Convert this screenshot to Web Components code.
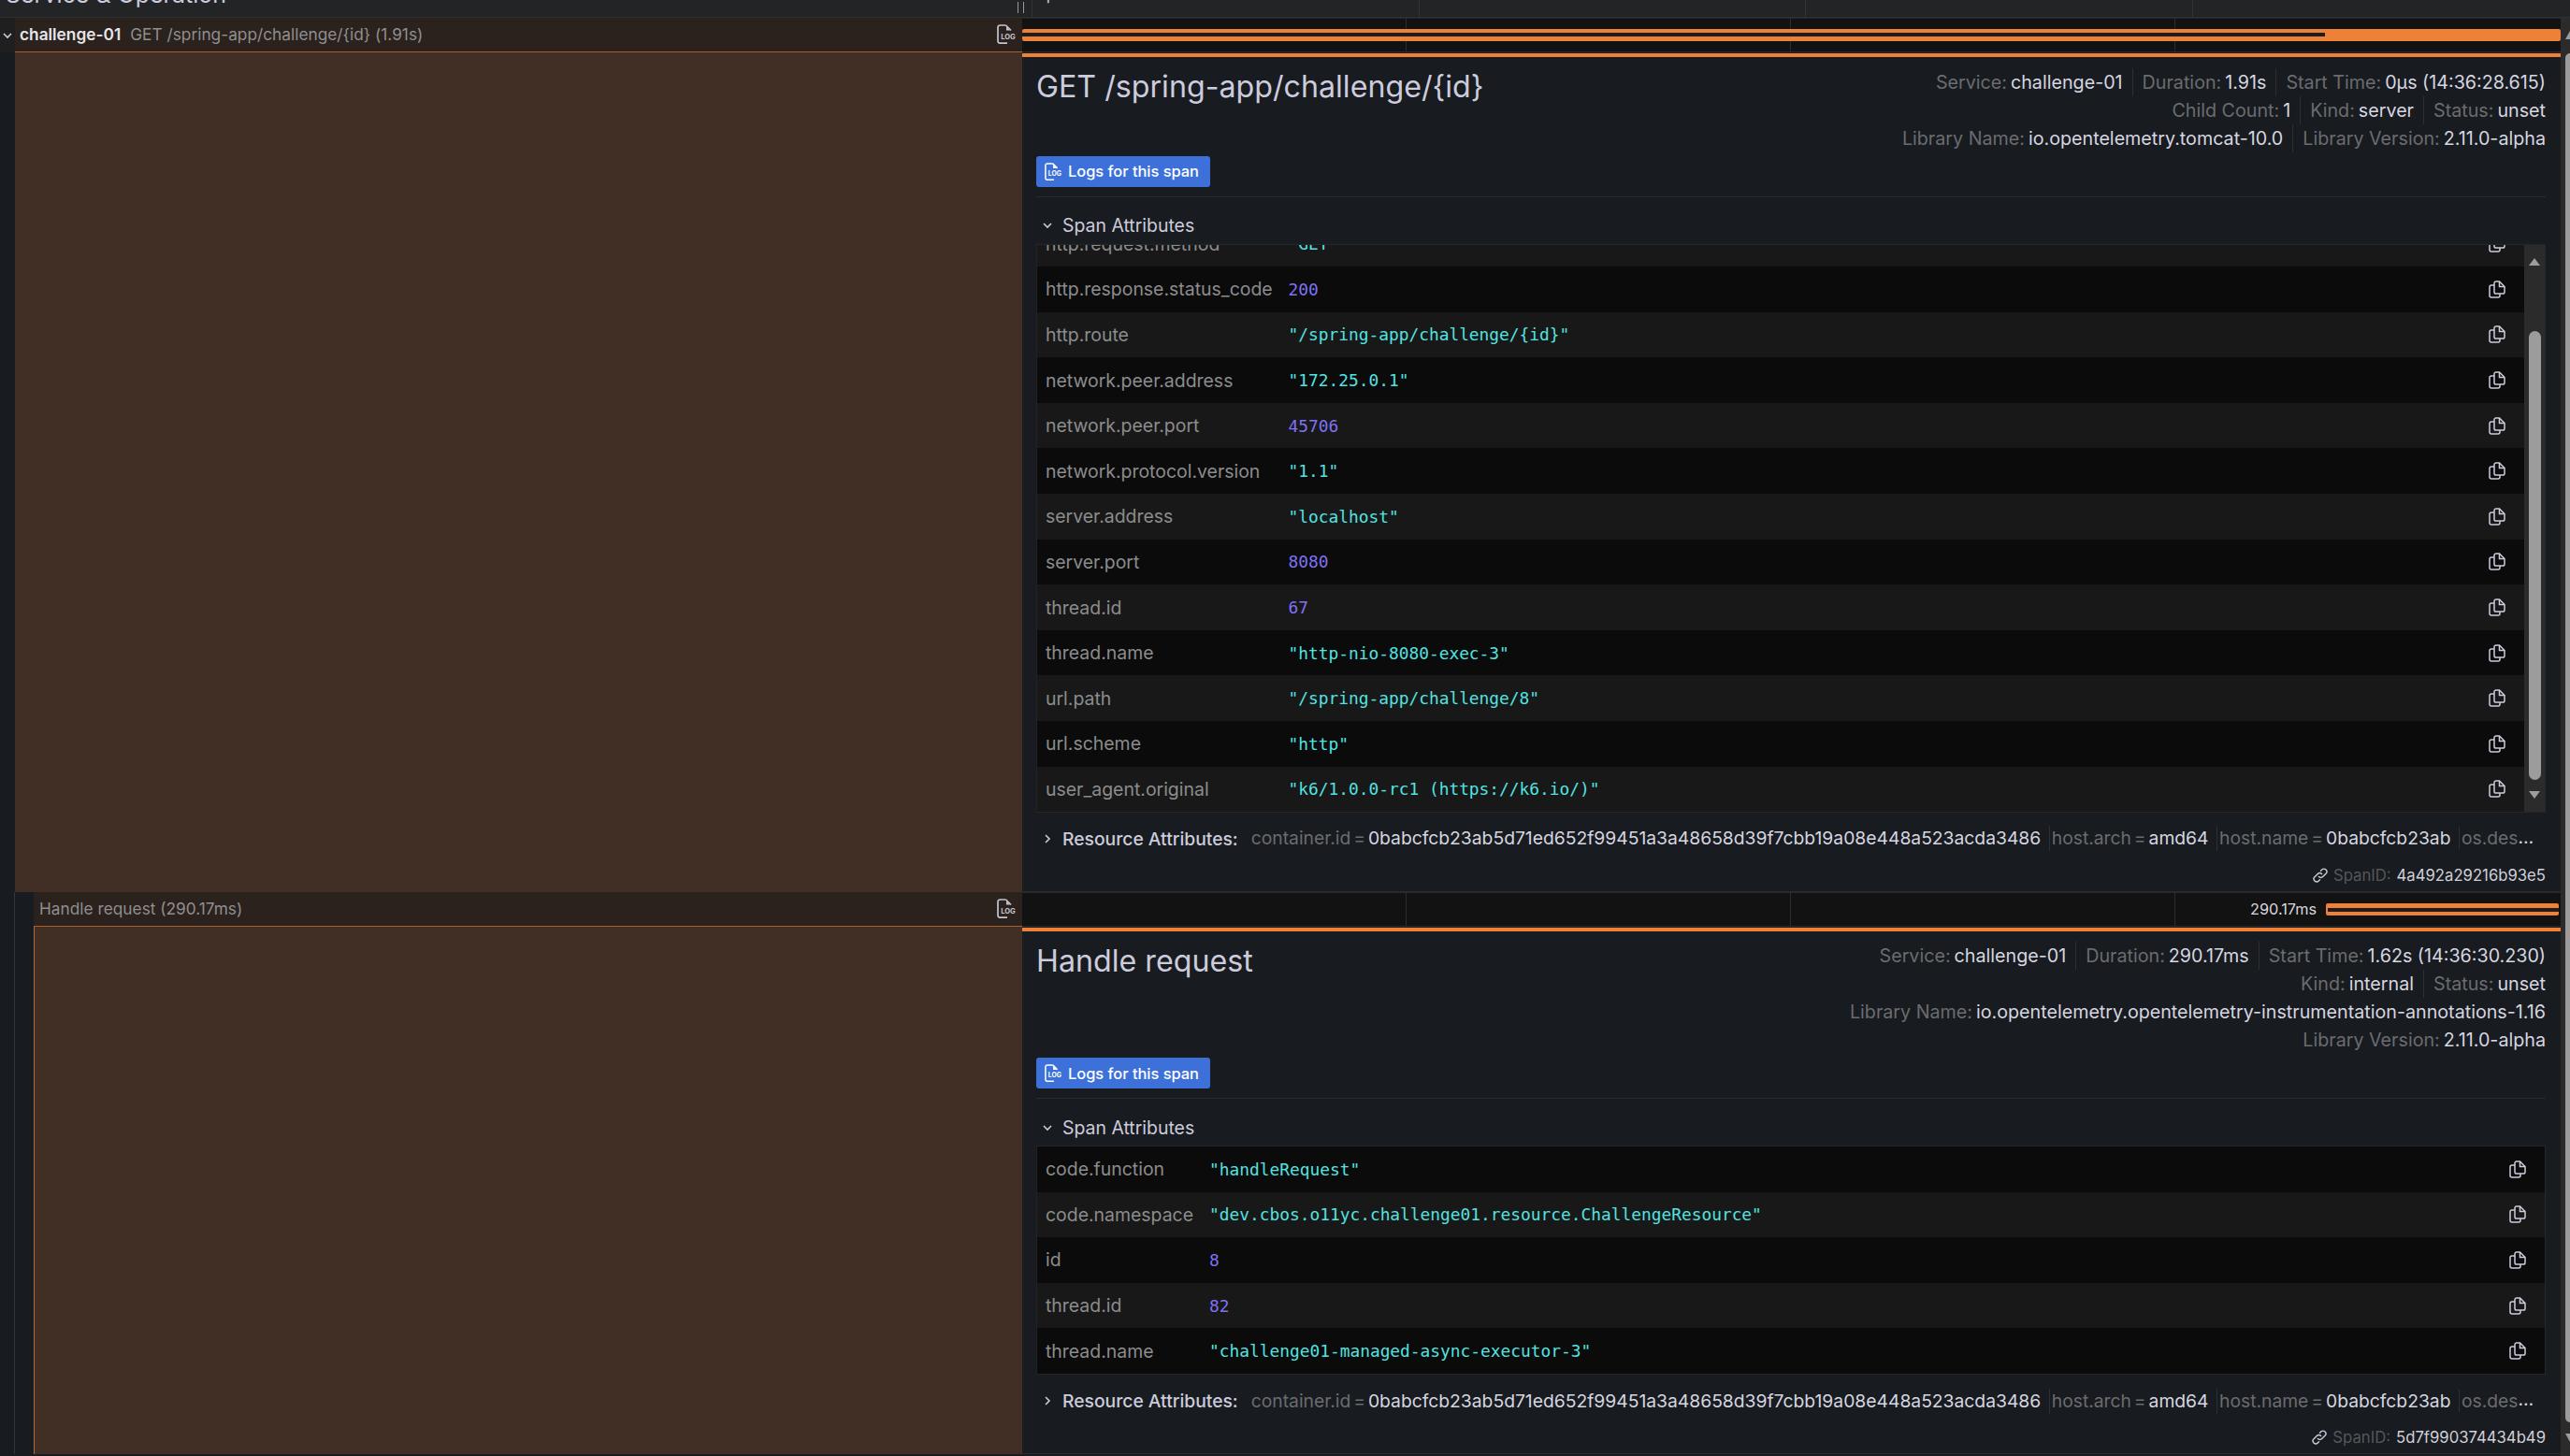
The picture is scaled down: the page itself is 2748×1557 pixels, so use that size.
<!DOCTYPE html>
<html lang="en"><head><meta charset="utf-8"><title>Trace view</title>
<style>
html,body{margin:0;padding:0;height:1557px;overflow:hidden;background:#181b1f;}
body{font-family:Inter,"Noto Sans",sans-serif;color:#ccccdc;display:flex;flex-direction:column;}
#main{display:flex;flex:1;min-height:0}
#spans{width:2738px;flex:none;display:flex;flex-direction:column;overflow:hidden}
</style></head><body>
<trace-header></trace-header>
<div id="main">
<div id="spans">
<span-group indent="0" label-main="challenge-01" label="GET /spring-app/challenge/{id} (1.91s)" fill="1393">
  <span-detail title-text="GET /spring-app/challenge/{id}" scroll span-id="4a492a29216b93e5" style="--val-col:259.5px">
    <meta-row slot="meta"><meta-item k="Service" v="challenge-01"></meta-item><meta-item k="Duration" v="1.91s"></meta-item><meta-item k="Start Time" v="0μs (14:36:28.615)"></meta-item></meta-row>
    <meta-row slot="meta"><meta-item k="Child Count" v="1"></meta-item><meta-item k="Kind" v="server"></meta-item><meta-item k="Status" v="unset"></meta-item></meta-row>
    <meta-row slot="meta"><meta-item k="Library Name" v="io.opentelemetry.tomcat-10.0"></meta-item><meta-item k="Library Version" v="2.11.0-alpha"></meta-item></meta-row>
    <attr-row alt k="http.request.method" s='"GET"'></attr-row>
    <attr-row k="http.response.status_code" n="200"></attr-row>
    <attr-row alt k="http.route" s='"/spring-app/challenge/{id}"'></attr-row>
    <attr-row k="network.peer.address" s='"172.25.0.1"'></attr-row>
    <attr-row alt k="network.peer.port" n="45706"></attr-row>
    <attr-row k="network.protocol.version" s='"1.1"'></attr-row>
    <attr-row alt k="server.address" s='"localhost"'></attr-row>
    <attr-row k="server.port" n="8080"></attr-row>
    <attr-row alt k="thread.id" n="67"></attr-row>
    <attr-row k="thread.name" s='"http-nio-8080-exec-3"'></attr-row>
    <attr-row alt k="url.path" s='"/spring-app/challenge/8"'></attr-row>
    <attr-row k="url.scheme" s='"http"'></attr-row>
    <attr-row alt k="user_agent.original" s='"k6/1.0.0-rc1 (https://k6.io/)"'></attr-row>
  </span-detail>
</span-group>
<span-group indent="1" label="Handle request (290.17ms)" duration="290.17ms">
  <span-detail title-text="Handle request" span-id="5d7f990374434b49" style="--val-col:175px">
    <meta-row slot="meta"><meta-item k="Service" v="challenge-01"></meta-item><meta-item k="Duration" v="290.17ms"></meta-item><meta-item k="Start Time" v="1.62s (14:36:30.230)"></meta-item></meta-row>
    <meta-row slot="meta"><meta-item k="Kind" v="internal"></meta-item><meta-item k="Status" v="unset"></meta-item></meta-row>
    <meta-row slot="meta"><meta-item k="Library Name" v="io.opentelemetry.opentelemetry-instrumentation-annotations-1.16"></meta-item></meta-row>
    <meta-row slot="meta"><meta-item k="Library Version" v="2.11.0-alpha"></meta-item></meta-row>
    <attr-row k="code.function" s='"handleRequest"'></attr-row>
    <attr-row alt k="code.namespace" s='"dev.cbos.o11yc.challenge01.resource.ChallengeResource"'></attr-row>
    <attr-row k="id" n="8"></attr-row>
    <attr-row alt k="thread.id" n="82"></attr-row>
    <attr-row k="thread.name" s='"challenge01-managed-async-executor-3"'></attr-row>
  </span-detail>
</span-group>
</div>
<page-scrollbar></page-scrollbar>
</div>
<script>
const LOG=(c)=>`<svg width="21" height="21" viewBox="0 0 21 21" fill="none" style="display:block"><path d="M9.5 1H3.2A2.2 2.2 0 0 0 1 3.2V18a2.2 2.2 0 0 0 2.2 2.2H11" stroke="${c}" stroke-width="1.7"/><path d="M9.5 1 15 6.5" stroke="${c}" stroke-width="1.7"/><path d="M10 2.5 14 6.5H10Z" fill="${c}"/><text x="4.2" y="15.6" font-family="Inter,sans-serif" font-weight="700" font-size="7.6" fill="${c}">LOG</text></svg>`;
const COPY=`<svg width="18" height="19" viewBox="0 0 18 19" fill="none" stroke="#ccccdc" stroke-width="1.5" style="display:block"><path d="M6 2.6A1.8 1.8 0 0 1 7.6 1H11.5L17 6.5V12.2A1.8 1.8 0 0 1 15.2 14H7.8A1.8 1.8 0 0 1 6 12.2Z"/><path d="M11.5 1V6.5H17"/><path d="M6 5H3A2 2 0 0 0 1 7V16A2 2 0 0 0 3 18H10A2 2 0 0 0 12 16V14"/></svg>`;
const LINK=`<svg width="18" height="18" viewBox="0 0 18 18" fill="none" stroke="#ccccdc" stroke-width="1.4" stroke-linecap="round" style="display:block"><path d="M7.4 10.6a3 3 0 0 0 4.3 0l3.3-3.3a3 3 0 0 0-4.3-4.3l-1.2 1.2"/><path d="M10.6 7.4a3 3 0 0 0-4.3 0L3 10.7A3 3 0 0 0 7.3 15l1.2-1.2"/></svg>`;
const CHEV=(d,c='#ccccdc')=>`<svg width="12" height="12" viewBox="0 0 12 12" fill="none" stroke="${c}" stroke-width="1.6" style="display:block"><path d="${d==='down'?'M2 4l4 4 4-4':'M4 2l4 4-4 4'}"/></svg>`;
const esc=s=>String(s).replace(/&/g,'&amp;').replace(/</g,'&lt;').replace(/"/g,'&quot;');
class Base extends HTMLElement{constructor(){super();this.attachShadow({mode:'open'});}
 a(n){return this.getAttribute(n);}
}
customElements.define('trace-header',class extends Base{connectedCallback(){this.shadowRoot.innerHTML=`<style>
:host{display:flex;height:19px;flex:none;background:#222426;box-sizing:border-box;overflow:hidden;position:relative;box-shadow:inset 0 -1px 0 #2f3033}
.name{width:1088px;flex:none;box-sizing:border-box;padding-left:6px;font-size:25px;line-height:30px;margin-top:-21px;color:#ccccdc;height:30px;white-space:nowrap}
.pause{flex:none;height:12px;margin-top:2px;box-sizing:border-box;border-left:1px solid #999;border-right:1px solid #999;width:7px;margin-right:8px}
.t{flex:none;width:413.5px;box-sizing:border-box;border-left:1px solid #333;padding-left:4px;font-size:17px;line-height:22px;height:19px;color:#ccccdc;display:flex;justify-content:space-between}
.t.last{flex:1;width:auto;padding-right:26px;padding-left:10px}
.t span{display:block;margin-top:-17px}
</style><div class="name">Service &amp; Operation</div><div class="pause"></div><div class="t"><span>0μs</span></div><div class="t"><span>477.5ms</span></div><div class="t"><span>955ms</span></div><div class="t last"><span>1.43s</span><span>1.91s</span></div>`;}});
customElements.define('page-scrollbar',class extends Base{connectedCallback(){this.shadowRoot.innerHTML=`<style>
:host{display:flex;flex-direction:column;flex:1;background:#2b2b2b;align-items:flex-end;box-sizing:border-box;position:relative}
.up{height:38px;flex:none;width:5px;display:flex;align-items:flex-start;padding-top:14px;box-sizing:border-box}
.thumb{width:5px;height:1464px;background:#9c9c9c;border-radius:5px 0 0 5px;flex:none}
.arr{width:0;height:0;border:5px solid transparent;border-left-width:5px;border-right-width:0;border-bottom:9px solid #9c9c9c;border-top:0}
.dn{margin-top:12px;width:0;height:0;border-top:9px solid #9c9c9c;border-left:5px solid transparent}
</style><div class="up"><div class="arr"></div></div><div class="thumb"></div><div class="dn"></div>`;}});
customElements.define('span-group',class extends Base{connectedCallback(){
 const ind=this.a('indent')==='1';const main=this.a('label-main');const fill=this.a('fill');const dur=this.a('duration');
 this.shadowRoot.innerHTML=`<style>
:host{display:grid;grid-template-columns:1093px 1fr;grid-template-rows:37px auto;flex:none;font-size:17.3px}
.gutter{display:flex;flex:none;width:${ind?36:16}px;background:#181b1f;position:relative}
.g16{width:16px;flex:none;box-sizing:border-box;border-right:${ind?'1px solid #34363a':'0'};background:${ind?'#181b1f':'#1f1f20'};display:flex;align-items:center;justify-content:center}
.g20{flex:1}
.row{display:flex;background:#181b1f}
.lbl{flex:1;min-width:0;display:flex;align-items:center;background:#2b211d;border-bottom:1px solid #a75f2d;padding-left:${ind?6:5}px;padding-bottom:1px;color:#8f8f8f;gap:10px;white-space:nowrap;box-sizing:border-box;justify-content:flex-start}
.lbl b{color:#e6e6ea;font-weight:600}
.lbl .sp{flex:1}.lg{margin-right:6px}
.tl{background:#121212;display:flex;position:relative;box-shadow:inset 0 -1px 0 #2a2c30,inset 0 1px 0 #25272a}
.tick{flex:none;width:411px;box-sizing:border-box;border-right:1px solid #2c2c2e}
.bar{position:absolute;border-radius:2px;background:#ee8138;height:13px;top:12px;left:${fill?0:1394}px;right:${fill?0:2}px}
.bar i{position:absolute;display:block;left:${fill?0:2}px;top:${fill?4:5}px;height:4px;width:${fill?fill+'px':'247px'};background:#1b1d20}
.dur{position:absolute;left:1313px;top:0;bottom:0;display:flex;align-items:center;color:#d8d8de;font-size:16.3px}
.left{display:flex;background:#181b1f}
.brown{flex:1;background:#412f25;border-left:1px solid #b5682f}
.right{min-width:0}
</style>
<div class="row"><div class="gutter"><div class="g16">${ind?'':CHEV('down')}</div>${ind?'<div class="g20"></div>':''}</div>
<div class="lbl">${main?`<b>${esc(main)}</b>`:''}<span>${esc(this.a('label'))}</span><span class="sp"></span><span class="lg">${LOG('#c5c5d0')}</span></div></div>
<div class="tl"><div class="tick"></div><div class="tick"></div><div class="tick"></div>${dur?`<div class="dur">${esc(dur)}</div>`:''}<div class="bar"><i></i></div></div>
<div class="left"><div class="gutter" style="width:${ind?36:15}px"><div class="g16" style="background:#181b1f"></div>${ind?'<div class="g20"></div>':''}</div><div class="brown"></div></div>
<div class="right"><slot></slot></div>`;}});
customElements.define('meta-item',class extends Base{connectedCallback(){this.shadowRoot.innerHTML=`<style>
:host{display:flex;align-items:center;height:30px;padding:0 10px;border-left:1px solid #2c2f34;white-space:nowrap;gap:4px;color:#6b6c70}
:host(:first-child){border-left:0}:host(:last-child){padding-right:0}
b{font-weight:400;color:#d6d6e0}
</style><span>${esc(this.a('k'))}:</span><b>${esc(this.a('v'))}</b>`;}});
customElements.define('meta-row',class extends Base{connectedCallback(){this.shadowRoot.innerHTML=`<style>:host{display:flex;justify-content:flex-end;font-size:19.7px}</style><slot></slot>`;}});
customElements.define('attr-row',class extends Base{connectedCallback(){const s=this.a('s'),n=this.a('n');this.shadowRoot.innerHTML=`<style>
:host{display:flex;align-items:center;height:48.6px;flex:none;padding-left:9px;background:#0b0b0c;font-size:19.45px;color:#8c8c8c}
:host([alt]){background:#181818}
.k{width:var(--val-col);flex:none;box-sizing:border-box;white-space:nowrap}
.v{flex:1;font-family:"DejaVu Sans Mono",monospace;font-size:17.85px;white-space:pre;color:${s?'#52e3e0':'#7f72f5'}}
.c{flex:none;margin-right:20px}
</style><span class="k">${esc(this.a('k'))}</span><span class="v">${esc(s||n)}</span><span class="c">${COPY}</span>`;}});
customElements.define('span-detail',class extends Base{connectedCallback(){const scroll=this.hasAttribute('scroll');
 this.shadowRoot.innerHTML=`<style>
:host{display:block;box-sizing:border-box;background:#181b1f;padding-top:1px;font-size:19.45px}
.orange{height:4px;background:#ee8138}
.body{padding:11.5px 16px 0 15px;box-sizing:border-box;border-bottom:1px solid #2a2c30}
.head{display:flex;justify-content:space-between;align-items:flex-start}
h2{margin:0.5px 0 0;font-weight:400;font-size:32.2px;line-height:40px;color:#ccccdc;white-space:nowrap;flex:none}
.meta{display:flex;flex-direction:column}
.btn{display:flex;align-items:center;gap:6px;width:186px;height:33px;margin-top:4px;box-sizing:border-box;background:#3d71d9;border-radius:3px;color:#fff;font-size:16.4px;font-weight:500;padding-left:9px;white-space:nowrap}
.hr{height:1px;background:#2a2c30;margin-top:10px}
.sec{height:50px;display:flex;align-items:center;padding-top:11px;box-sizing:border-box;gap:10px;padding-left:6px}
.tbl{display:flex;border:1px solid #25272b;border-left-color:#222;height:${scroll?'608px':'auto'};box-sizing:border-box;overflow:hidden;background:#0b0b0c}
.rows{flex:1;min-width:0;overflow:hidden;display:flex;flex-direction:column}
.rows-in{display:flex;flex-direction:column;margin-top:${scroll?'-25px':'0'}}
.sb{flex:none;width:22px;background:#2b2b2b;display:flex;flex-direction:column;align-items:center}
.au{margin-top:14px;width:0;height:0;border:6.5px solid transparent;border-top:0;border-bottom:8px solid #9c9c9c}
.th{margin-top:70px;width:13px;height:480px;background:#9c9c9c;border-radius:7px}
.ad{margin-top:12px;width:0;height:0;border:6.5px solid transparent;border-bottom:0;border-top:8px solid #9c9c9c}
.res{height:51px;display:flex;align-items:center;padding-top:5px;box-sizing:border-box;padding-left:6px;gap:10px;white-space:nowrap;min-width:0}
.res>b{font-weight:500;color:#ccccdc;flex:none;font-size:19.3px}
.list{flex:1;min-width:0;overflow:hidden;text-overflow:ellipsis;white-space:nowrap;margin-left:4px;padding-right:5px;color:#d6d6e0;font-size:19.3px}
.list span{display:inline-block;height:27px;line-height:27px;padding:0 8.5px 0 2px;border-left:1px solid #2c2f34;vertical-align:middle}
.list span:first-child{border-left:0;padding-left:0}
.list em{font-style:normal;color:#6b6c70;word-spacing:-2.5px}
.list span.o{display:inline;padding-right:0}
.id{display:flex;justify-content:flex-end;align-items:center;height:33px;gap:6px;color:#55575c;font-size:16.7px}
.id svg{margin-right:-1px}.id b{font-weight:400;color:#d0d0da}
</style><div class="orange"></div><div class="body">
<div class="head"><h2>${esc(this.a('title-text'))}</h2><div class="meta"><slot name="meta"></slot></div></div>
<div class="btn">${LOG('#ffffff').replace('width="21" height="21"','width="19" height="19"')}<span>Logs for this span</span></div>
<div class="hr"></div>
<div class="sec">${CHEV('down')}<span>Span Attributes</span></div>
<div class="tbl"><div class="rows"><div class="rows-in"><slot></slot></div></div>${scroll?'<div class="sb"><div class="au"></div><div class="th"></div><div class="ad"></div></div>':''}</div>
<div class="res">${CHEV('right')}<b>Resource Attributes:</b><div class="list"><span><em>container.id = </em>0babcfcb23ab5d71ed652f99451a3a48658d39f7cbb19a08e448a523acda3486</span><span><em>host.arch = </em>amd64</span><span><em>host.name = </em>0babcfcb23ab</span><span class="o"><em>os.description = Linux 6.8.0</em></span></div></div>
<div class="id">${LINK}<span>SpanID:</span><b>${esc(this.a('span-id'))}</b></div>
</div>`;}});
</script>
</body></html>
